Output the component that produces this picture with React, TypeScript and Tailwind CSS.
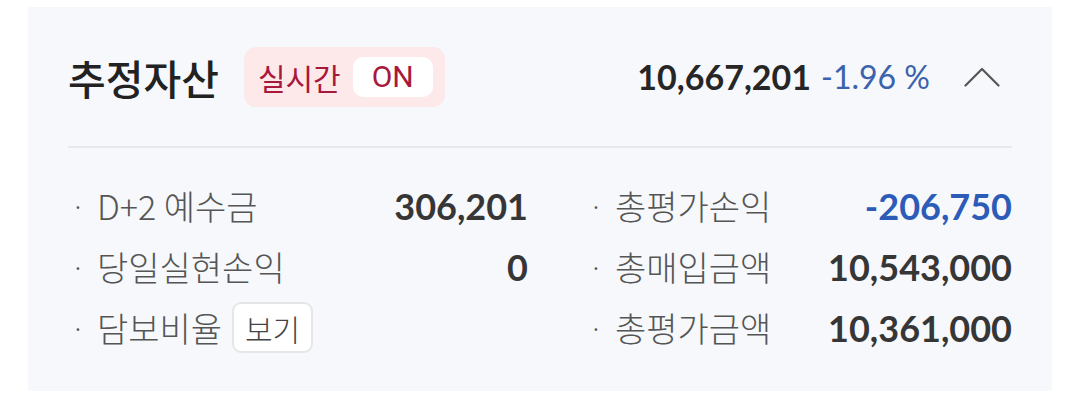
import React from "react";

const KR = "font-['Noto_Sans_CJK_KR','Noto_Sans',sans-serif]";
const NUM = "font-['Lato','Noto_Sans_CJK_KR',sans-serif]";

function Row({ label, value, valueClass = "text-[#363636]", extra }: { label: string; value?: string; valueClass?: string; extra?: React.ReactNode }) {
  return (
    <div className="flex h-[61px] items-center justify-between">
      <div className={`flex items-center ${KR} text-[34px] font-light text-[#555] leading-none`}>
        <span className="w-[29px] pl-[3px] text-[26px]">·</span>
        <span>{label}</span>
        {extra}
      </div>
      {value !== undefined && (
        <span className={`${NUM} text-[36px] font-bold leading-none ${valueClass}`}>{value}</span>
      )}
    </div>
  );
}

export default function App() {
  return (
    <div className="w-[1080px] h-[403px] bg-white pt-[7px] pl-[28px]">
      <div className="w-[1024px] h-[384px] bg-[#f6f8fb] px-[40px]">
        <div className="flex items-center justify-between pt-[40px] pb-[39px]">
          <div className="flex items-center">
            <span className={`${KR} text-[41px] font-medium text-[#222] leading-none`}>추정자산</span>
            <div className="ml-[25px] flex h-[60px] items-center rounded-[12px] bg-[#fde9e9] pl-[14px] pr-[12px]">
              <span className={`${KR} text-[30px] text-[#a8183c] leading-none`}>실시간</span>
              <span className="ml-[12px] flex h-[40px] w-[80px] items-center justify-center rounded-[10px] bg-white font-['Roboto',sans-serif] text-[30px] text-[#a8183c] leading-none">ON</span>
            </div>
          </div>
          <div className="flex items-center">
            <span className={`${NUM} text-[34px] font-bold text-[#262626] leading-none`}>10,667,201</span>
            <span className={`${NUM} ml-[10px] text-[32px] text-[#3a62ad] leading-none`}>-1.96 %</span>
            <svg className="ml-[34px] mr-[12px]" width="36" height="22" viewBox="0 0 36 22" fill="none">
              <polyline points="1.5,19.5 18,3 34.5,19.5" stroke="#555" strokeWidth="2.2" strokeLinecap="round" strokeLinejoin="round" />
            </svg>
          </div>
        </div>
        <div className="h-[2px] bg-[#e6e8ec]" />
        <div className="grid grid-cols-[460px_426px] gap-x-[58px] pt-[27px]">
          <div className="flex flex-col">
            <Row label="D+2 예수금" value="306,201" />
            <Row label="당일실현손익" value="0" />
            <Row
              label="담보비율"
              extra={
                <span className="ml-[10px] flex h-[51px] w-[81px] items-center justify-center rounded-[9px] border-2 border-[#e6e6e6] bg-white text-[30px] text-[#444]">
                  보기
                </span>
              }
            />
          </div>
          <div className="flex flex-col">
            <Row label="총평가손익" value="-206,750" valueClass="text-[#2c5bb8]" />
            <Row label="총매입금액" value="10,543,000" />
            <Row label="총평가금액" value="10,361,000" />
          </div>
        </div>
      </div>
    </div>
  );
}
